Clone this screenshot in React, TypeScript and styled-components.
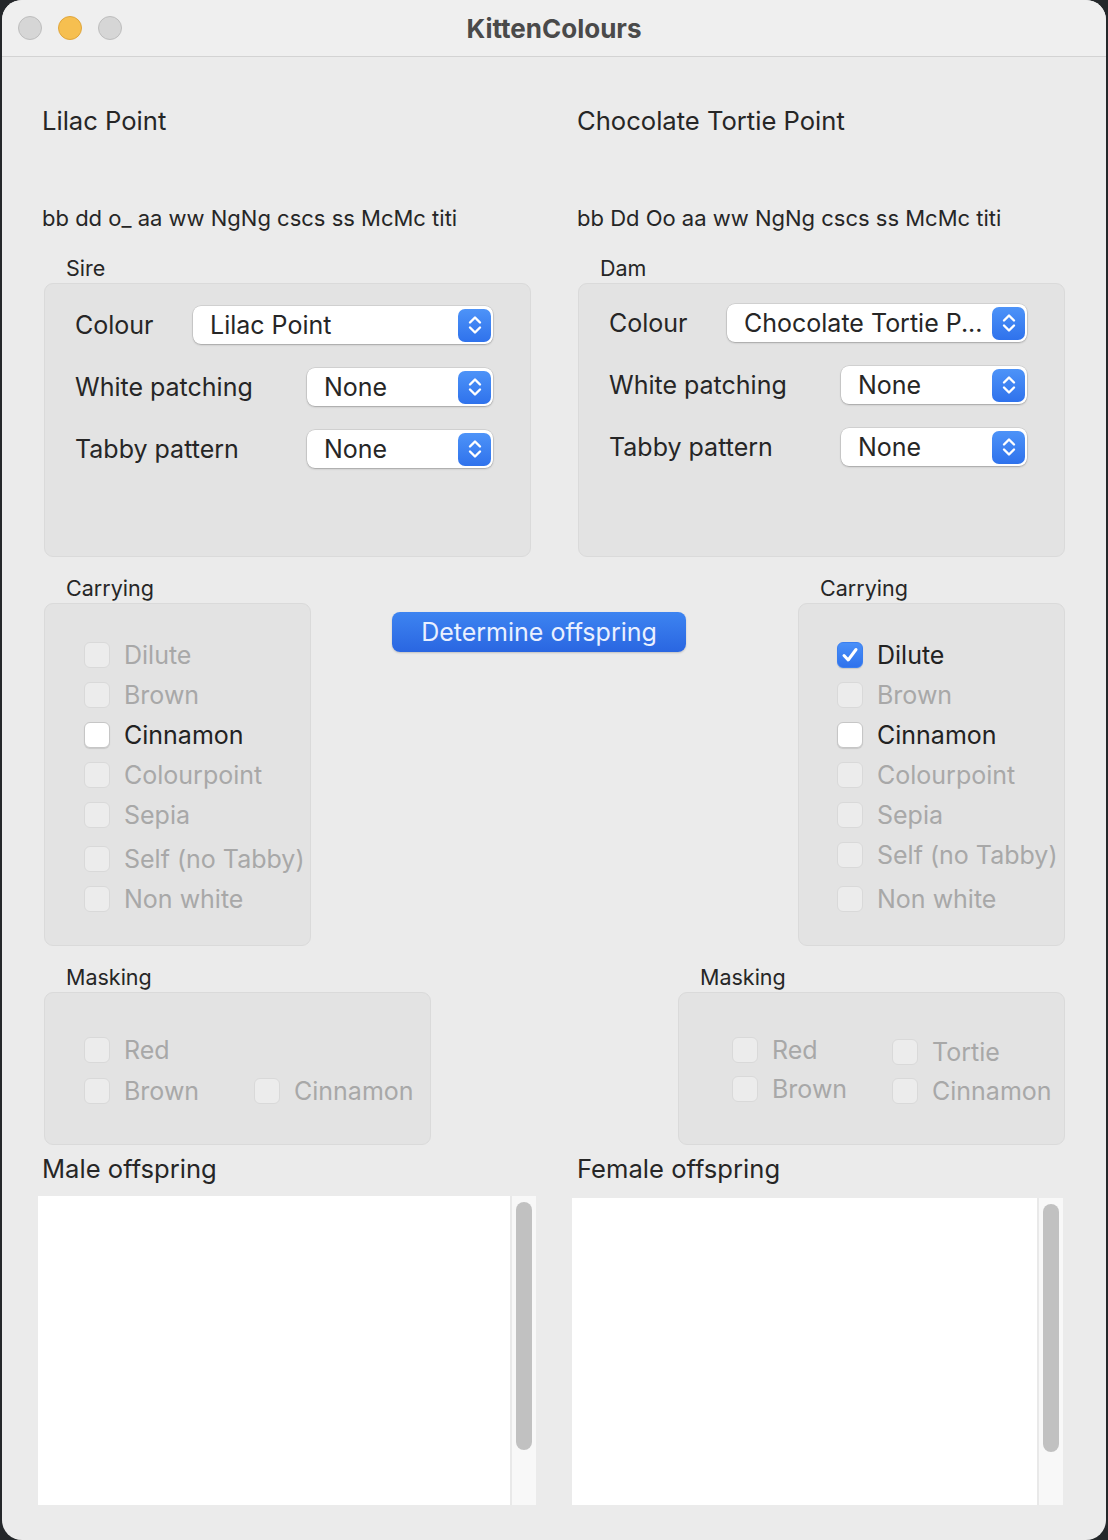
import React from "react";
import styled, { createGlobalStyle } from "styled-components";

const GlobalStyle = createGlobalStyle`
  html, body {
    margin: 0;
    padding: 0;
    background: #24272a;
  }
  body {
    font-family: Inter, "Noto Sans", "Liberation Sans", sans-serif;
    -webkit-font-smoothing: antialiased;
  }
`;

const Window = styled.div`
  margin: 0 2px;
  width: 1104px;
  height: 1540px;
  background: #ebebeb;
  border-radius: 20px;
  overflow: hidden;
  display: flex;
  flex-direction: column;
  color: #262626;
`;

const TitleBar = styled.div`
  height: 56px;
  flex: none;
  background: #efefef;
  border-bottom: 1px solid #d3d3d3;
  display: flex;
  align-items: center;
  position: relative;
  padding-left: 16px;
`;

const Lights = styled.div`
  display: flex;
  gap: 16px;
`;

const Light = styled.span<{ $color: string; $border: string }>`
  width: 24px;
  height: 24px;
  border-radius: 50%;
  box-sizing: border-box;
  background: ${(p) => p.$color};
  border: 1px solid ${(p) => p.$border};
`;

const Title = styled.div`
  position: absolute;
  left: 0;
  right: 0;
  text-align: center;
  font-size: 26px;
  font-weight: 700;
  color: #4a4a4a;
  pointer-events: none;
`;

const Content = styled.div`
  padding: 0 41px 0 40px;
  display: flex;
  flex-direction: column;
`;

const TwoCols = styled.div<{ $mt: number }>`
  display: grid;
  grid-template-columns: 489px 488px;
  column-gap: 46px;
  margin-top: ${(p) => p.$mt}px;
`;

const Heading = styled.div`
  font-size: 25.6px;
  line-height: 32px;
  color: #262626;
  white-space: nowrap;
`;

const Genotype = styled.div`
  font-size: 22px;
  line-height: 28px;
  color: #262626;
  white-space: nowrap;
`;

const Group = styled.div<{ $width?: number; $ml?: number }>`
  display: flex;
  flex-direction: column;
  width: ${(p) => (p.$width ? `${p.$width}px` : "auto")};
  margin-left: ${(p) => p.$ml ?? 2}px;
  min-width: 0;
`;

const GroupLabel = styled.div`
  font-size: 21.5px;
  line-height: 28px;
  padding-left: 22px;
  margin-bottom: 1px;
  color: #262626;
  white-space: nowrap;
`;

const GroupBox = styled.div<{ $height: number }>`
  height: ${(p) => p.$height}px;
  box-sizing: border-box;
  background: #e3e3e3;
  border: 1px solid #dadada;
  border-radius: 9px;
`;

const FormGrid = styled.div<{ $pt: number }>`
  display: grid;
  grid-template-columns: minmax(0, 1fr) auto;
  row-gap: 24px;
  align-items: center;
  padding: ${(p) => p.$pt}px 37px 0 30px;
`;

const FieldLabel = styled.div`
  font-size: 25px;
  color: #262626;
  white-space: nowrap;
`;

const Popup = styled.div<{ $width: number }>`
  justify-self: end;
  width: ${(p) => p.$width}px;
  height: 38px;
  box-sizing: border-box;
  background: #ffffff;
  border-radius: 8px;
  box-shadow: 0 0 0 0.5px rgba(0, 0, 0, 0.14), 0 1px 2px rgba(0, 0, 0, 0.22);
  display: flex;
  align-items: center;
  padding: 0 2px 0 17px;
`;

const PopupText = styled.span`
  flex: 1;
  font-size: 25px;
  color: #262626;
  white-space: nowrap;
  overflow: hidden;
`;

const Stepper = styled.span`
  width: 33px;
  height: 33px;
  border-radius: 7px;
  background: linear-gradient(#4d93f8, #2f72ec);
  display: flex;
  align-items: center;
  justify-content: center;
`;

const MiddleRow = styled.div`
  display: flex;
  align-items: flex-start;
  margin-top: 17px;
`;

const ButtonArea = styled.div`
  flex: 1;
  display: flex;
  padding-top: 38px;
  padding-left: 81px;
`;

const PushButton = styled.button`
  width: 294px;
  height: 40px;
  border: none;
  border-radius: 8px;
  background: linear-gradient(#3d84f1, #2a66e1);
  box-shadow: 0 1px 2px rgba(0, 0, 0, 0.18);
  color: #e9f0ff;
  font-family: inherit;
  font-size: 25px;
  padding: 0;
`;

const CheckList = styled.div<{ $pl: number }>`
  display: flex;
  flex-direction: column;
  padding: 31px 0 0 ${(p) => p.$pl}px;
`;

const CheckRow = styled.div<{ $extra?: number }>`
  display: flex;
  align-items: center;
  gap: 14px;
  height: 40px;
  margin-top: ${(p) => p.$extra ?? 0}px;
`;

const Box = styled.span<{ $state: "disabled" | "off" | "on" }>`
  width: 26px;
  height: 26px;
  flex: none;
  box-sizing: border-box;
  border-radius: 6px;
  display: flex;
  align-items: center;
  justify-content: center;
  background: ${(p) =>
    p.$state === "on"
      ? "linear-gradient(#4a90f8, #2f72ec)"
      : p.$state === "off"
      ? "#ffffff"
      : "#ececec"};
  border: 1px solid
    ${(p) => (p.$state === "on" ? "#3a7ff0" : p.$state === "off" ? "#c6c6c6" : "#d9d9d9")};
  box-shadow: ${(p) => (p.$state === "disabled" ? "none" : "0 1px 1px rgba(0,0,0,0.12)")};
`;

const CheckText = styled.span<{ $dim: boolean }>`
  font-size: 25px;
  color: ${(p) => (p.$dim ? "#a8a8a8" : "#222222")};
  white-space: nowrap;
`;

const BottomRow = styled.div`
  display: flex;
  justify-content: space-between;
  margin-top: 17px;
`;

const MaskGrid = styled.div<{ $pl: number; $col: number }>`
  display: grid;
  grid-template-columns: ${(p) => p.$col}px auto;
  grid-template-rows: 41px 41px;
  padding: 36px 0 0 ${(p) => p.$pl}px;
`;

const Cell = styled.div<{ $row: number; $col: number; $dy?: number }>`
  grid-row: ${(p) => p.$row};
  grid-column: ${(p) => p.$col};
  display: flex;
  align-items: center;
  gap: 14px;
  transform: translateY(${(p) => p.$dy ?? 0}px);
`;

const OffspringRow = styled.div`
  display: grid;
  grid-template-columns: 498px 491px;
  column-gap: 36px;
  margin: 8px 0 0 -4px;
`;

const OffspringCol = styled.div<{ $pl: number; $mt: number }>`
  display: flex;
  flex-direction: column;
  & > ${Heading} {
    padding-left: ${(p) => p.$pl}px;
    margin-bottom: ${(p) => p.$mt}px;
  }
`;

const ListView = styled.div<{ $h: number }>`
  height: ${(p) => p.$h}px;
  display: flex;
  background: #ffffff;
`;

const ListBody = styled.div`
  flex: 1;
`;

const Track = styled.div`
  width: 26px;
  box-sizing: border-box;
  background: #f8f8f8;
  border-left: 2px solid #e9e9e9;
  padding: 6px 0 0 4px;
`;

const Thumb = styled.div`
  width: 16px;
  height: 248px;
  border-radius: 8px;
  background: #c1c1c1;
`;

const Chevrons = () => (
  <svg width="18" height="24" viewBox="0 0 18 24" fill="none">
    <path d="M4 9.5 L9 4.5 L14 9.5" stroke="#fff" strokeWidth="2.4" strokeLinecap="round" strokeLinejoin="round" />
    <path d="M4 14.5 L9 19.5 L14 14.5" stroke="#fff" strokeWidth="2.4" strokeLinecap="round" strokeLinejoin="round" />
  </svg>
);

const Tick = () => (
  <svg width="20" height="20" viewBox="0 0 20 20" fill="none">
    <path d="M4 10.5 L8.2 15 L16 4.5" stroke="#fff" strokeWidth="3" strokeLinecap="round" strokeLinejoin="round" />
  </svg>
);

type CState = "disabled" | "off" | "on";

const Check = ({ state, label }: { state: CState; label: string }) => (
  <>
    <Box $state={state}>{state === "on" && <Tick />}</Box>
    <CheckText $dim={state === "disabled"}>{label}</CheckText>
  </>
);

const Select = ({ width, value }: { width: number; value: string }) => (
  <Popup $width={width}>
    <PopupText>{value}</PopupText>
    <Stepper>
      <Chevrons />
    </Stepper>
  </Popup>
);

const ParentBox = ({ label, colour, pt, ml }: { label: string; colour: string; pt: number; ml: number }) => (
  <Group $ml={ml}>
    <GroupLabel>{label}</GroupLabel>
    <GroupBox $height={274}>
      <FormGrid $pt={pt}>
        <FieldLabel>Colour</FieldLabel>
        <Select width={300} value={colour} />
        <FieldLabel>White patching</FieldLabel>
        <Select width={186} value="None" />
        <FieldLabel>Tabby pattern</FieldLabel>
        <Select width={186} value="None" />
      </FormGrid>
    </GroupBox>
  </Group>
);

type Item = { label: string; state: CState; extra?: number };

const Carrying = ({ items, pl }: { items: Item[]; pl: number }) => (
  <Group $width={267}>
    <GroupLabel>Carrying</GroupLabel>
    <GroupBox $height={343}>
      <CheckList $pl={pl}>
        {items.map((it) => (
          <CheckRow key={it.label} $extra={it.extra}>
            <Check state={it.state} label={it.label} />
          </CheckRow>
        ))}
      </CheckList>
    </GroupBox>
  </Group>
);

const Offspring = ({ title, pl, mt, h }: { title: string; pl: number; mt: number; h: number }) => (
  <OffspringCol $pl={pl} $mt={mt}>
    <Heading>{title}</Heading>
    <ListView $h={h}>
      <ListBody />
      <Track>
        <Thumb />
      </Track>
    </ListView>
  </OffspringCol>
);

export default function App() {
  const sireCarry: Item[] = [
    { label: "Dilute", state: "disabled" },
    { label: "Brown", state: "disabled" },
    { label: "Cinnamon", state: "off" },
    { label: "Colourpoint", state: "disabled" },
    { label: "Sepia", state: "disabled" },
    { label: "Self (no Tabby)", state: "disabled", extra: 4 },
    { label: "Non white", state: "disabled" },
  ];
  const damCarry: Item[] = [
    { label: "Dilute", state: "on" },
    { label: "Brown", state: "disabled" },
    { label: "Cinnamon", state: "off" },
    { label: "Colourpoint", state: "disabled" },
    { label: "Sepia", state: "disabled" },
    { label: "Self (no Tabby)", state: "disabled" },
    { label: "Non white", state: "disabled", extra: 4 },
  ];

  return (
    <>
      <GlobalStyle />
      <Window>
        <TitleBar>
          <Lights>
            <Light $color="#d6d6d6" $border="#bdbdbd" />
            <Light $color="#f6bf50" $border="#dfa53c" />
            <Light $color="#d6d6d6" $border="#bdbdbd" />
          </Lights>
          <Title>KittenColours</Title>
        </TitleBar>
        <Content>
          <TwoCols $mt={48}>
            <Heading>Lilac Point</Heading>
            <Heading>Chocolate Tortie Point</Heading>
          </TwoCols>
          <TwoCols $mt={67}>
            <Genotype>bb dd o_ aa ww NgNg cscs ss McMc titi</Genotype>
            <Genotype>bb Dd Oo aa ww NgNg cscs ss McMc titi</Genotype>
          </TwoCols>
          <TwoCols $mt={22}>
            <ParentBox label="Sire" colour="Lilac Point" pt={22} ml={2} />
            <ParentBox label="Dam" colour="Chocolate Tortie P..." pt={20} ml={1} />
          </TwoCols>
          <MiddleRow>
            <Carrying items={sireCarry} pl={39} />
            <ButtonArea>
              <PushButton>Determine offspring</PushButton>
            </ButtonArea>
            <Carrying items={damCarry} pl={38} />
          </MiddleRow>
          <BottomRow>
            <Group $width={387}>
              <GroupLabel>Masking</GroupLabel>
              <GroupBox $height={153}>
                <MaskGrid $pl={39} $col={170}>
                  <Cell $row={1} $col={1}>
                    <Check state="disabled" label="Red" />
                  </Cell>
                  <Cell $row={2} $col={1}>
                    <Check state="disabled" label="Brown" />
                  </Cell>
                  <Cell $row={2} $col={2}>
                    <Check state="disabled" label="Cinnamon" />
                  </Cell>
                </MaskGrid>
              </GroupBox>
            </Group>
            <Group $width={387}>
              <GroupLabel>Masking</GroupLabel>
              <GroupBox $height={153}>
                <MaskGrid $pl={53} $col={160}>
                  <Cell $row={1} $col={1}>
                    <Check state="disabled" label="Red" />
                  </Cell>
                  <Cell $row={2} $col={1} $dy={-2}>
                    <Check state="disabled" label="Brown" />
                  </Cell>
                  <Cell $row={1} $col={2} $dy={2}>
                    <Check state="disabled" label="Tortie" />
                  </Cell>
                  <Cell $row={2} $col={2}>
                    <Check state="disabled" label="Cinnamon" />
                  </Cell>
                </MaskGrid>
              </GroupBox>
            </Group>
          </BottomRow>
          <OffspringRow>
            <Offspring title="Male offspring" pl={4} mt={11} h={309} />
            <Offspring title="Female offspring" pl={5} mt={13} h={307} />
          </OffspringRow>
        </Content>
      </Window>
    </>
  );
}
